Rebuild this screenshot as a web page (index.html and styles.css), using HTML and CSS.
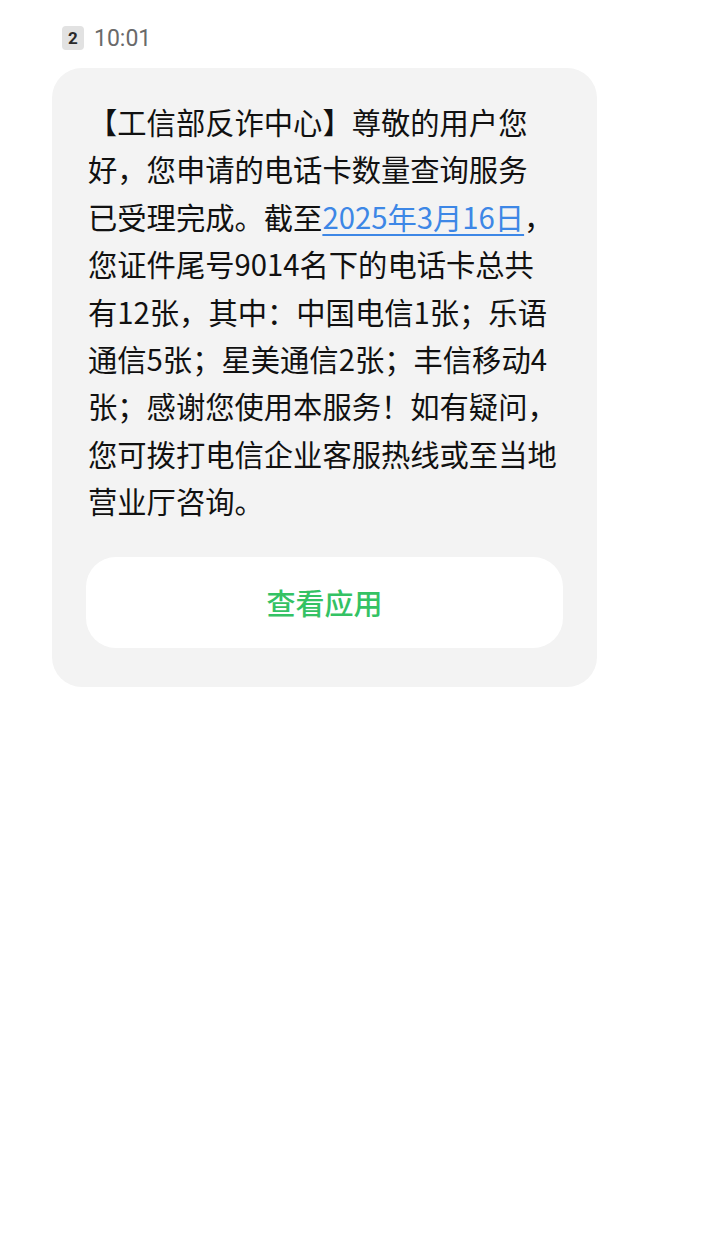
FILE: index.html
```html
<!DOCTYPE html>
<html lang="zh-CN">
<head>
    <meta charset="UTF-8">
    <meta name="viewport" content="width=device-width, initial-scale=1.0">
    <title>短信</title>
    <link rel="stylesheet" href="styles.css">
</head>
<body>
    <div class="thread">
        <div class="msg-meta">
            <span class="sim-badge">2</span>
            <span class="msg-time">10:01</span>
        </div>

        <div class="bubble">
            <!-- line breaks kept as the phone wrapped them -->
            <p class="msg-text">【工信部反诈中心】尊敬的用户您<br>好，您申请的电话卡数量查询服务<br>已受理完成。截至<a class="date-link" href="#">2025年3月16日</a>，<br>您证件尾号9014名下的电话卡总共<br>有12张，其中：中国电信1张；乐语<br>通信5张；星美通信2张；丰信移动4<br>张；感谢您使用本服务！如有疑问，<br>您可拨打电信企业客服热线或至当地<br>营业厅咨询。</p>
            <div class="action-btn">查看应用</div>
        </div>
    </div>
</body>
</html>
```

FILE: styles.css
```css
* {
    margin: 0;
    padding: 0;
    box-sizing: border-box;
}

body {
    font-family: "Noto Sans CJK SC", "Noto Sans", sans-serif;
    background: #fff;
    color: #111;
}

.thread {
    padding: 24px 0 0 52px;
}

.msg-meta {
    display: flex;
    align-items: center;
    gap: 10px;
    padding-left: 10px;
    height: 28px;
}

.sim-badge {
    display: inline-flex;
    align-items: center;
    justify-content: center;
    width: 22px;
    height: 24px;
    background: #e2e2e2;
    border-radius: 4px;
    font-family: "Roboto", sans-serif;
    font-weight: bold;
    font-size: 17px;
    color: #2a2a2a;
}

.msg-time {
    font-family: "Roboto", sans-serif;
    font-size: 23px;
    color: #6a6a6a;
}

.bubble {
    width: 545px;
    margin-top: 16px;
    background: #f3f3f3;
    border-radius: 30px;
    padding: 30px 34px 39px 36px;
}

.msg-text {
    font-size: 29.3px;
    line-height: 47.4px;
    color: #111;
    white-space: nowrap;
}

.date-link {
    color: #3d87e6;
    text-decoration: underline;
    text-underline-offset: 5px;
    text-decoration-thickness: 2px;
}

.action-btn {
    margin-top: 32px;
    margin-left: -2px;
    height: 91px;
    background: #fff;
    border-radius: 30px;
    display: flex;
    align-items: center;
    justify-content: center;
    font-size: 29px;
    font-weight: 500;
    color: #34c264;
}
```
